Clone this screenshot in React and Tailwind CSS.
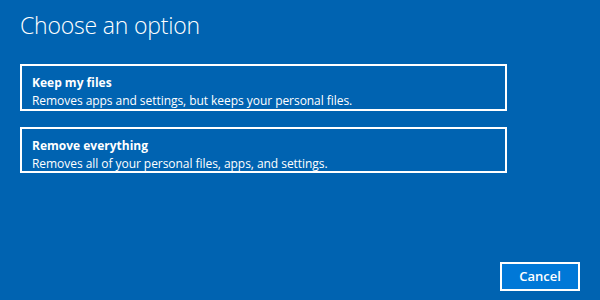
export default function App() {
  return (
    <div className="w-[600px] h-[300px] bg-[#0063b1] text-white flex flex-col px-5 pb-2 overflow-hidden" style={{ fontFamily: '"Open Sans", "Noto Sans", sans-serif' }}>
      <h1 className="text-[23px] font-light leading-none mt-[14px] tracking-[-0.2px] h-[24px]">Choose an option</h1>
      <div className="flex flex-col gap-4 mt-[26px] w-[487px]">
        <div className="border-2 border-white h-[47px] px-[10px] pt-[9px]">
          <div className="text-[12px] font-bold leading-[15px]">Keep my files</div>
          <div className="text-[12px] leading-[16px] mt-[3px] tracking-[-0.05px]">Removes apps and settings, but keeps your personal files.</div>
        </div>
        <div className="border-2 border-white h-[46px] px-[10px] pt-[9px]">
          <div className="text-[12px] font-bold leading-[15px]">Remove everything</div>
          <div className="text-[12px] leading-[16px] mt-[3px] tracking-[-0.05px]">Removes all of your personal files, apps, and settings.</div>
        </div>
      </div>
      <div className="mt-auto flex justify-end">
        <button className="w-[80px] h-[29px] bg-[#0078d7] border-2 border-white text-[13px] font-semibold mb-[1px]">Cancel</button>
      </div>
    </div>
  );
}
